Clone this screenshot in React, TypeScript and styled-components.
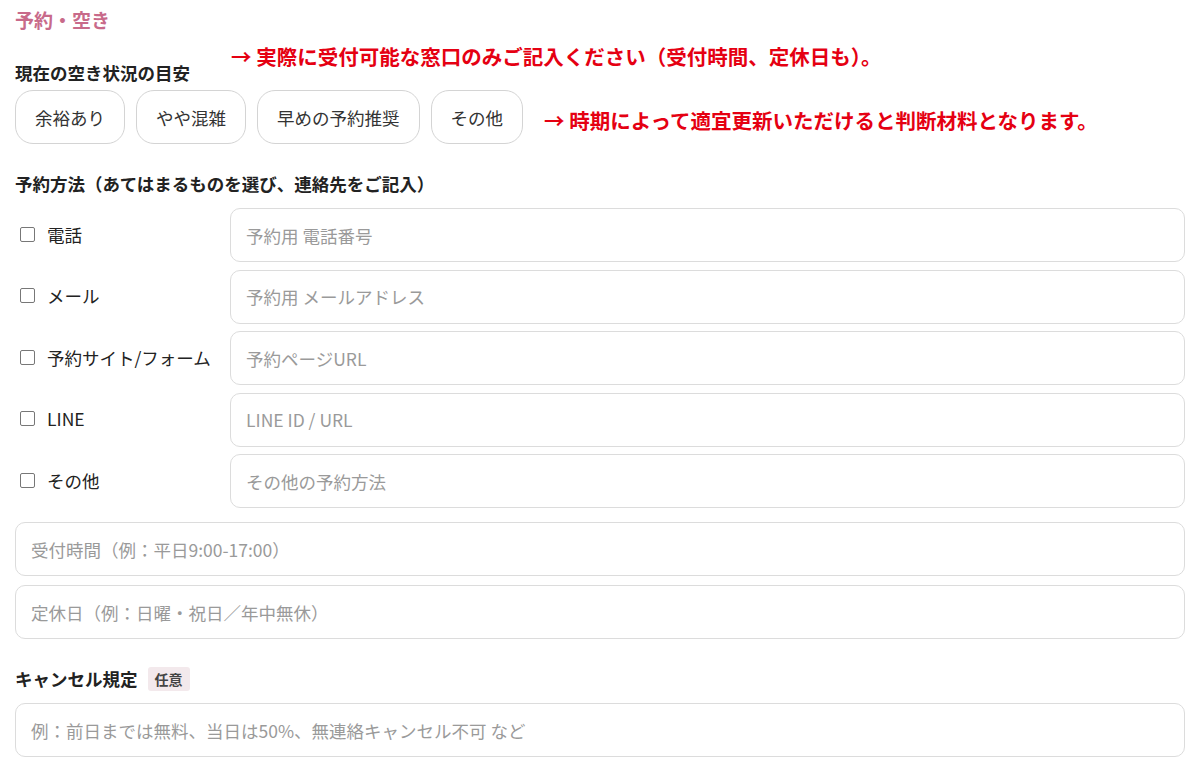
import React from 'react';
import styled, { createGlobalStyle } from 'styled-components';

const GlobalStyle = createGlobalStyle`
  body {
    margin: 0;
    background: #ffffff;
    font-family: "Noto Sans CJK JP", "Noto Sans", sans-serif;
    color: #222;
  }
  * { box-sizing: border-box; }
`;

const Page = styled.div`
  padding: 7px 15px 12px 15px;
  width: 1200px;
`;

const SectionTitle = styled.div`
  color: #c86a8a;
  font-size: 19px;
  font-weight: 700;
  line-height: 26px;
  margin-bottom: 6px;
`;

const LabelRow = styled.div`
  display: flex;
  align-items: flex-start;
  height: 48px;
`;

const Label = styled.div<{ $top?: number }>`
  font-size: 17.5px;
  font-weight: 700;
  line-height: 24px;
  margin-top: ${(p) => p.$top ?? 0}px;
  display: flex;
  align-items: center;
  gap: 10px;
`;

const Note = styled.div<{ $offset?: number; $top?: number }>`
  color: #e50012;
  font-size: 20.5px;
  font-weight: 700;
  line-height: 26px;
  white-space: nowrap;
  margin-left: ${(p) => p.$offset ?? 0}px;
  margin-top: ${(p) => p.$top ?? 0}px;
`;

const ChipRow = styled.div`
  display: flex;
  align-items: center;
  gap: 11px;
  margin-top: 3px;
`;

const Chip = styled.button`
  height: 54px;
  padding: 0 19px;
  border: 1.5px solid #d4d4d4;
  border-radius: 18px;
  background: #fff;
  font-family: inherit;
  font-size: 17.5px;
  color: #333;
`;

const MethodLabel = styled(Label)`
  margin-top: 28px;
  margin-bottom: 12px;
`;

const Rows = styled.div`
  display: flex;
  flex-direction: column;
  gap: 7.5px;
`;

const MethodRow = styled.div`
  display: grid;
  grid-template-columns: 215px 1fr;
  align-items: center;
`;

const CheckLabel = styled.label`
  display: flex;
  align-items: center;
  gap: 12px;
  padding-left: 5px;
  font-size: 17.5px;
  color: #222;
  margin-top: -2px;
  white-space: nowrap;
`;

const Box = styled.span`
  width: 15px;
  height: 15px;
  border: 1px solid #777;
  border-radius: 2px;
  background: #fff;
  flex: none;
`;

const Field = styled.div`
  height: 54px;
  border: 1.5px solid #dcdcdc;
  border-radius: 10px;
  display: flex;
  align-items: center;
  padding: 0 15px;
  font-size: 17.5px;
  color: #9a9a9a;
  background: #fff;
`;

const WideFields = styled.div`
  display: flex;
  flex-direction: column;
  gap: 9px;
  margin-top: 14px;
`;

const Badge = styled.span`
  background: #f3e9ec;
  color: #444;
  font-size: 14px;
  font-weight: 700;
  padding: 0 7px;
  border-radius: 3px;
  line-height: 24px;
`;

const CancelLabel = styled(Label)`
  margin-top: 28px;
  margin-bottom: 12px;
`;

const methods = [
  { label: '電話', placeholder: '予約用 電話番号' },
  { label: 'メール', placeholder: '予約用 メールアドレス' },
  { label: '予約サイト/フォーム', placeholder: '予約ページURL' },
  { label: 'LINE', placeholder: 'LINE ID / URL' },
  { label: 'その他', placeholder: 'その他の予約方法' },
];

const chips = ['余裕あり', 'やや混雑', '早めの予約推奨', 'その他'];

export default function App() {
  return (
    <Page>
      <GlobalStyle />
      <SectionTitle>予約・空き</SectionTitle>
      <LabelRow>
        <Label $top={22}>現在の空き状況の目安</Label>
        <Note $offset={41} $top={4}>→ 実際に受付可能な窓口のみご記入ください（受付時間、定休日も）。</Note>
      </LabelRow>
      <ChipRow>
        {chips.map((c) => (
          <Chip key={c}>{c}</Chip>
        ))}
        <Note $offset={10} $top={6}>→ 時期によって適宜更新いただけると判断材料となります。</Note>
      </ChipRow>
      <MethodLabel>予約方法（あてはまるものを選び、連絡先をご記入）</MethodLabel>
      <Rows>
        {methods.map((m) => (
          <MethodRow key={m.label}>
            <CheckLabel>
              <Box />
              {m.label}
            </CheckLabel>
            <Field>{m.placeholder}</Field>
          </MethodRow>
        ))}
      </Rows>
      <WideFields>
        <Field>受付時間（例：平日9:00-17:00）</Field>
        <Field>定休日（例：日曜・祝日／年中無休）</Field>
      </WideFields>
      <CancelLabel>
        キャンセル規定 <Badge>任意</Badge>
      </CancelLabel>
      <Field>例：前日までは無料、当日は50%、無連絡キャンセル不可 など</Field>
    </Page>
  );
}
